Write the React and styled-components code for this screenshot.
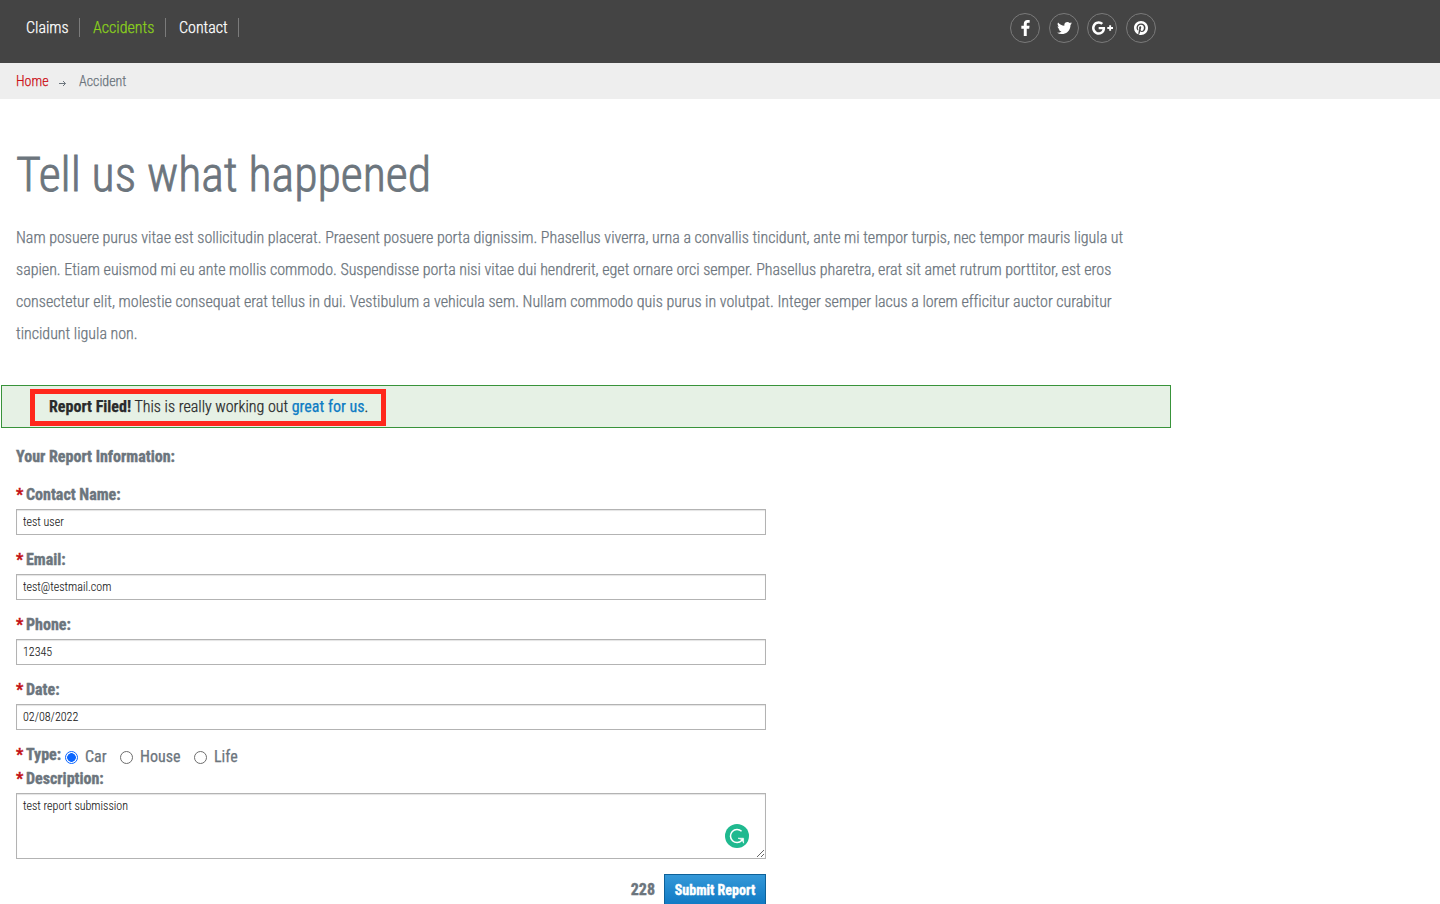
import React from "react";
import styled, { createGlobalStyle } from "styled-components";

const Global = createGlobalStyle`
  *, *::before, *::after { box-sizing: border-box; }
  html, body { margin: 0; height: 904px; overflow: hidden; background: #fff; }
  body {
    font-family: "Roboto Condensed", Roboto, "Liberation Sans Narrow", sans-serif;
    font-stretch: 75%;
    font-size: 16px;
    color: #6c757d;
    -webkit-text-stroke: 0.25px currentColor;
  }
  h1, p { margin: 0; }
`;

const TopBar = styled.header`
  height: 63px;
  background: #444;
`;
const TopInner = styled.div`
  width: 1172px;
  display: flex;
  justify-content: space-between;
  padding: 13px 16px 0 26px;
`;
const Nav = styled.nav`
  display: flex;
  padding-top: 5px;
  height: 24px;
`;
const NavLink = styled.a`
  height: 19px;
  line-height: 19px;
  width: ${(p) => p.$width}px;
  margin-right: 13px;
  border-right: 1px solid #7b7b7b;
  color: ${(p) => (p.$active ? "#8ad01c" : "#fff")};
  font-weight: 300;
  white-space: nowrap;
`;
const Social = styled.div`
  display: flex;
  gap: 8.7px;
`;
const SocialLink = styled.a`
  width: 30px;
  height: 30px;
  border: 1px solid #7a7a7a;
  border-radius: 50%;
  display: flex;
  align-items: center;
  justify-content: center;
  padding: 0 0 1px ${(p) => p.$shift}px;
`;
const SocialIcon = styled.svg`
  display: block;
  width: ${(p) => p.$width}px;
  height: 16px;
  fill: #fff;
  flex: none;
`;
const Crumbs = styled.div`
  height: 36px;
  background: #eee;
  padding-left: 16px;
  display: flex;
  align-items: center;
  font-size: 14px;
  font-weight: 300;
  line-height: 36px;
`;
const Home = styled.a`
  color: #cc0f16;
  width: 43px;
`;
const Arrow = styled.svg`
  width: 7px;
  height: 7px;
  margin: 4px 13px 0 0;
`;
const Main = styled.main`
  width: 1172px;
`;
const Title = styled.h1`
  font-size: 48px;
  font-weight: 300;
  line-height: 60px;
  padding: 46px 16px 0;
  letter-spacing: -0.03px;
  -webkit-text-stroke: 0.8px currentColor;
`;
const Intro = styled.p`
  padding: 17px 16px 0;
  line-height: 32px;
  font-weight: 300;
  letter-spacing: -0.007px;
  white-space: nowrap;
`;
const Alert = styled.div`
  margin: 35px 1px 0;
  height: 43px;
  border: 1px solid #38933a;
  background: #e6f1e5;
  padding: 3px 0 0 28px;
`;
const AlertFrame = styled.div`
  width: 356px;
  height: 37px;
  border: 5px solid #ff281c;
  padding-left: 14px;
  line-height: 26px;
  color: #292b2c;
  font-weight: 300;
  white-space: nowrap;
`;
const AlertStrong = styled.strong`
  font-weight: 700;
`;
const AlertLink = styled.a`
  color: #0d7cc4;
  font-weight: 400;
`;
const Form = styled.form`
  width: 766px;
  padding-left: 16px;
`;
const Heading = styled.p`
  font-weight: 700;
  line-height: 20px;
  padding-top: 19px;
  margin-bottom: 18px;
  -webkit-text-stroke: 0.4px currentColor;
`;
const Field = styled.div`
  height: 65px;
`;
const Label = styled.label`
  display: block;
  height: 24px;
  line-height: 20px;
  font-weight: 700;
  white-space: nowrap;
  -webkit-text-stroke: 0.4px currentColor;
`;
const Star = styled.span`
  display: inline-block;
  width: 10px;
  color: #c30f14;
`;
const Input = styled.input`
  display: block;
  width: 750px;
  height: 26px;
  margin: 0;
  padding: 0 6px;
  border: 1px solid #b3b3b3;
  border-radius: 0;
  box-shadow: inset 0 1px 1px #e4e4e4;
  outline: none;
  font: inherit;
  font-size: 12px;
  font-weight: 300;
  color: #222;
  -webkit-text-stroke: 0.1px currentColor;
`;
const TypeRow = styled.div`
  display: flex;
  height: 24px;
`;
const TypeLabel = styled(Label)`
  width: 49px;
`;
const Option = styled.label`
  display: flex;
  width: ${(p) => p.$width}px;
  line-height: 24px;
  white-space: nowrap;
`;
const Radio = styled.span`
  width: 13px;
  height: 13px;
  margin: 6px 7px 0 0;
  border: 1px solid ${(p) => (p.$on ? "#0b66ff" : "#6d6d6d")};
  border-radius: 50%;
  background: ${(p) => (p.$on ? "radial-gradient(circle, #0b66ff 4px, #fff 4.6px)" : "#fff")};
`;
const AreaWrap = styled.div`
  position: relative;
  height: 66px;
`;
const Area = styled.textarea`
  display: block;
  width: 750px;
  height: 66px;
  margin: 0;
  padding: 5px 6px;
  border: 1px solid #b3b3b3;
  box-shadow: inset 0 1px 1px #e4e4e4;
  outline: none;
  resize: none;
  overflow: hidden;
  font: inherit;
  font-size: 12px;
  line-height: 14px;
  font-weight: 300;
  color: #222;
  -webkit-text-stroke: 0.1px currentColor;
`;
const Badge = styled.svg`
  position: absolute;
  right: 17px;
  bottom: 11px;
  width: 24px;
  height: 24px;
`;
const Grip = styled.svg`
  position: absolute;
  right: 1px;
  bottom: 1px;
  width: 9px;
  height: 9px;
`;
const Actions = styled.div`
  display: flex;
  justify-content: flex-end;
  padding-top: 15px;
`;
const Counter = styled.span`
  font-weight: 700;
  line-height: 31px;
  margin-right: 9px;
  -webkit-text-stroke: 0.4px currentColor;
`;
const Submit = styled.button`
  width: 102px;
  height: 34px;
  padding: 0 0 3px;
  border: 1px solid #0e6199;
  background: linear-gradient(#3498d8, #0d77c2);
  color: #fff;
  font: inherit;
  font-size: 14px;
  font-weight: 700;
  white-space: nowrap;
  -webkit-text-stroke: 0.4px currentColor;
`;

const fields = [
  ["Contact Name:", "test user"],
  ["Email:", "test@testmail.com"],
  ["Phone:", "12345"],
  ["Date:", "02/08/2022"],
];

const icons = [
  {
    name: "facebook",
    width: 9,
    shift: 2,
    box: "95 -1536 864 1664",
    d: "M959 -1524v264h-157q-86 0 -116 36t-30 108v189h293l-39 296h-254v759h-306v-759h-255v-296h255v-218q0 -186 104 -288.500t277 -102.500q147 0 228 12z",
  },
  {
    name: "twitter",
    width: 15,
    shift: 1,
    box: "44 -1472 1576 1664",
    d: "M1620 -1128q-67 98 -162 167q1 14 1 42q0 130 -38 259.500t-115.500 248.500t-184.500 210.500t-258 146t-323 54.500q-271 0 -496 -145q35 4 78 4q225 0 401 -138q-105 -2 -188 -64.500t-114 -159.500q33 5 61 5q43 0 85 -11q-112 -23 -185.500 -111.500t-73.500 -205.500v-4q68 38 146 41q-66 -44 -105 -115t-39 -154q0 -88 44 -163q121 149 294.500 238.500t371.500 99.500q-8 -38 -8 -74q0 -134 94.500 -228.500t228.500 -94.500q140 0 236 102q109 -21 205 -78q-37 115 -142 178q93 -10 186 -50z",
  },
  {
    name: "google-plus",
    width: 21,
    shift: 1,
    box: "0 -1472 2304 1664",
    d: "M1437 -623q0 208 -87 370.500t-248 254t-369 91.500q-149 0 -285 -58t-234 -156t-156 -234t-58 -285t58 -285t156 -234t234 -156t285 -58q286 0 491 192l-199 191q-117 -113 -292 -113q-123 0 -227.500 62t-165.500 168.500t-61 232.500t61 232.500t165.500 168.500t227.500 62q83 0 152.500 -23t114.500 -57.500t78.500 -78.500t49 -83t21.500 -74h-416v-252h692q12 63 12 122zM2304 -745v210h-209v209h-210v-209h-209v-210h209v-209h210v209h209z",
  },
  {
    name: "pinterest",
    width: 14,
    shift: 0,
    box: "0 20 496 536",
    d: "M496 288c0 137-111 248-248 248-25.600 0-50.200-3.900-73.400-11.100 10.100-16.500 25.200-43.500 30.800-65 3-11.600 15.400-59 15.400-59 8.100 15.400 31.700 28.500 56.800 28.500 74.800 0 128.700-68.800 128.700-154.300 0-81.900-66.900-143.200-152.900-143.200-107 0-163.900 71.800-163.900 150.100 0 36.400 19.400 81.700 50.300 96.100 4.700 2.200 7.200 1.200 8.300-3.300.8-3.400 5-20.300 6.900-28.100.6-2.500.3-4.700-1.700-7.100-10.100-12.500-18.300-35.300-18.300-56.600 0-54.700 41.400-107.600 112-107.600 60.900 0 103.600 41.500 103.600 100.900 0 67.100-33.900 113.600-78 113.600-24.300 0-42.600-20.100-36.700-44.800 7-29.500 20.500-61.300 20.500-82.600 0-19-10.200-34.900-31.400-34.900-24.900 0-44.900 25.700-44.900 60.200 0 22 7.400 36.800 7.400 36.800s-24.500 103.800-29 123.200c-5 21.400-3 51.600-.9 71.200C65.400 482.900 0 393.100 0 288 0 151 111 40 248 40s248 111 248 248z",
  },
];

export default function App() {
  return (
    <>
      <Global />
      <TopBar>
        <TopInner>
          <Nav>
            <NavLink $width={54}>Claims</NavLink>
            <NavLink $width={73} $active>Accidents</NavLink>
            <NavLink $width={60}>Contact</NavLink>
          </Nav>
          <Social>
            {icons.map((icon) => (
              <SocialLink key={icon.name} aria-label={icon.name} $shift={icon.shift}>
                <SocialIcon viewBox={icon.box} $width={icon.width}>
                  <path d={icon.d} />
                </SocialIcon>
              </SocialLink>
            ))}
          </Social>
        </TopInner>
      </TopBar>
      <Crumbs>
        <Home>Home</Home>
        <Arrow viewBox="0 0 7 7" fill="none" stroke="#6c757d">
          <path d="M0 3.5h6.4M4 1l2.5 2.5L4 6" />
        </Arrow>
        <span>Accident</span>
      </Crumbs>
      <Main>
        <Title>Tell us what happened</Title>
        <Intro>
          Nam posuere purus vitae est sollicitudin placerat. Praesent posuere porta dignissim. Phasellus viverra, urna a convallis tincidunt, ante mi tempor turpis, nec tempor mauris ligula ut<br />
          sapien. Etiam euismod mi eu ante mollis commodo. Suspendisse porta nisi vitae dui hendrerit, eget ornare orci semper. Phasellus pharetra, erat sit amet rutrum porttitor, est eros<br />
          consectetur elit, molestie consequat erat tellus in dui. Vestibulum a vehicula sem. Nullam commodo quis purus in volutpat. Integer semper lacus a lorem efficitur auctor curabitur<br />
          tincidunt ligula non.
        </Intro>
        <Alert>
          <AlertFrame>
            <AlertStrong>Report Filed!</AlertStrong> This is really working out <AlertLink>great for us</AlertLink>.
          </AlertFrame>
        </Alert>
        <Form>
          <Heading>Your Report Information:</Heading>
          {fields.map(([label, value]) => (
            <Field key={label}>
              <Label><Star>*</Star>{label}</Label>
              <Input defaultValue={value} />
            </Field>
          ))}
          <TypeRow>
            <TypeLabel><Star>*</Star>Type:</TypeLabel>
            <Option $width={55}><Radio $on />Car</Option>
            <Option $width={74}><Radio />House</Option>
            <Option $width={60}><Radio />Life</Option>
          </TypeRow>
          <Label><Star>*</Star>Description:</Label>
          <AreaWrap>
            <Area defaultValue="test report submission" />
            <Badge viewBox="0 0 24 24" fill="none">
              <circle cx="12" cy="12" r="12" fill="#1fb98f" />
              <path d="M16.6 7.2A6.6 6.6 0 1 0 16.8 16.600L18 15" stroke="#fff" strokeWidth="1.5" />
              <path d="M13 14.200h5.600v5l-1.700-3.500z" fill="#fff" stroke="#fff" strokeWidth="0.6" />
            </Badge>
            <Grip viewBox="0 0 9 9" stroke="#555" strokeWidth="0.9">
              <path d="M1 8L8 1M5 8L8 5" />
            </Grip>
          </AreaWrap>
          <Actions>
            <Counter>228</Counter>
            <Submit type="button">Submit Report</Submit>
          </Actions>
        </Form>
      </Main>
    </>
  );
}
